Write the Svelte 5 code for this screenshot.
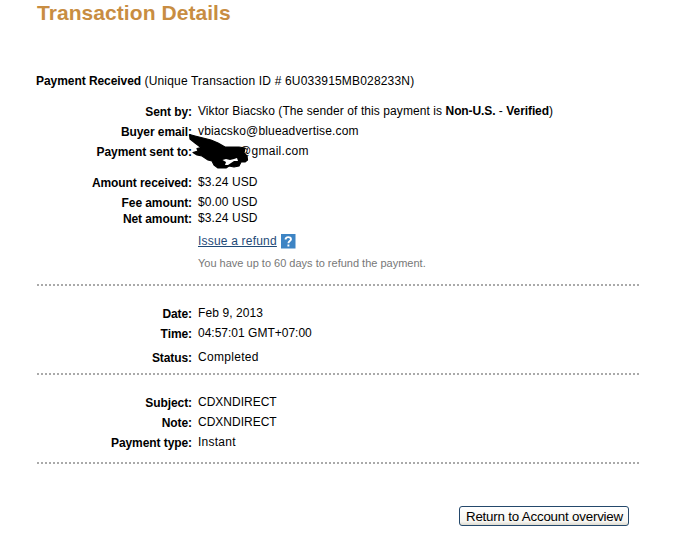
<script>
  const groups = [
    [
      { label: 'Sent by:', value: 'Viktor Biacsko (The sender of this payment is ', strong: 'Non-U.S.', strong2: 'Verified', gap: 0, ls: 0.08 },
      { label: 'Buyer email:', value: 'vbiacsko@blueadvertise.com', gap: 4, ls: 0.17 },
      { label: 'Payment sent to:', value: '@gmail.com', redacted: true, gap: 4, ls: 0.28 },
      { label: 'Amount received:', value: '$3.24 USD', gap: 15, ls: 0.1 },
      { label: 'Fee amount:', value: '$0.00 USD', gap: 4, ls: 0.1 },
      { label: 'Net amount:', value: '$3.24 USD', gap: 0, ls: 0.1 },
      { link: 'Issue a refund', gap: 7, ls: 0.2 },
      { hint: 'You have up to 60 days to refund the payment.', gap: 6, ls: 0 }
    ],
    [
      { label: 'Date:', value: 'Feb 9, 2013', gap: 0, ls: 0.1 },
      { label: 'Time:', value: '04:57:01 GMT+07:00', gap: 4, ls: 0 },
      { label: 'Status:', value: 'Completed', gap: 8, ls: 0.3 }
    ],
    [
      { label: 'Subject:', value: 'CDXNDIRECT', gap: 0, ls: 0 },
      { label: 'Note:', value: 'CDXNDIRECT', gap: 4, ls: 0 },
      { label: 'Payment type:', value: 'Instant', gap: 4, ls: 0.25 }
    ]
  ];
</script>

<main>
  <h1>Transaction Details</h1>
  <p class="received"><b>Payment Received</b> <span>(Unique Transaction ID # 6U033915MB028233N)</span></p>

  {#each groups as rows}
    <section>
      {#each rows as row}
        <div class="row" style:margin-top="{row.gap}px">
          <div class="label">{row.label ?? ''}</div>
          <div class="value" style:letter-spacing="{row.ls}px">
            {#if row.link}
              <a href="#refund">{row.link}</a>
              <svg class="help" width="15" height="15" viewBox="0 0 15 15">
                <rect width="14.5" height="14.5" fill="#3d84c4" />
                <path d="M4.6 5.4C4.6 2.5 10 2.3 10 5.2C10 7.1 7.4 7 7.4 9.2M7.4 10.5V12.5" fill="none" stroke="#fff" stroke-width="1.9" />
              </svg>
            {:else if row.hint}
              <span class="hint">{row.hint}</span>
            {:else if row.redacted}
              <span class="mail">{row.value}</span>
              <svg class="scribble" width="62" height="38" viewBox="188 132 62 38">
                <path d="M189.500 134.500L195 136L203 138L211 140L218 143L225 147H239L245 148L244 153L247 156L247.500 160L245 162H241L239 166L234 167L229 166L226 168H218L214 165L212 161L208 160L202 156L197 155L193 152.500L198 151L197 148.500L201 147.500L195 143L190 139Z" fill="#000" stroke="#000" stroke-width="1.200" stroke-linejoin="round" />
                <path d="M222.500 160L226 159L230 160L234 159L237 158L238 161L234 161L231 163L228 165H225L226 162Z" fill="#fff" />
              </svg>
            {:else if row.strong}
              {row.value}<b>{row.strong}</b> - <b>{row.strong2}</b>)
            {:else}
              {row.value}
            {/if}
          </div>
        </div>
      {/each}
    </section>
  {/each}

  <button>Return to Account overview</button>
</main>

<style>
  :global(body) { background: #fff; }
  main {
    box-sizing: border-box;
    width: 676px;
    height: 546px;
    padding: 1px 37px 0;
    overflow: hidden;
    display: flex;
    flex-direction: column;
    font: 12px/16px "Liberation Sans", Arial, sans-serif;
    color: #000;
    white-space: nowrap;
  }
  h1 { margin: 0; font-size: 21px; line-height: 23px; letter-spacing: 0.06px; color: #c88d42; }
  .received { margin: 49px 0 0 -1px; height: 16px; }
  .received b { letter-spacing: -0.06px; }
  .received span { letter-spacing: 0.18px; }
  section {
    width: 602px;
    box-sizing: border-box;
    padding: 19px 0 12px;
    background: repeating-linear-gradient(90deg, #aaa 0 2px, transparent 2px 4px) 0 100% / 100% 2px no-repeat;
  }
  section:nth-of-type(1) { height: 197px; padding-top: 14px; }
  section:nth-of-type(2), section:nth-of-type(3) { height: 89px; }
  .row { display: flex; height: 16px; }
  .label { width: 155px; line-height: 18px; text-align: right; font-weight: bold; letter-spacing: -0.08px; }
  .value { margin-left: 6px; display: flex; align-items: center; position: relative; white-space: pre; }
  .value b { letter-spacing: -0.1px; }
  a { color: #1f4a78; }
  .help { margin-left: 4px; }
  .hint { font-size: 11px; color: #777; }
  .mail { margin-left: 41px; }
  .scribble { position: absolute; left: -10px; top: -11px; }
  button {
    align-self: flex-end;
    box-sizing: border-box;
    width: 170px;
    height: 20px;
    margin: 42px 10px 0 0;
    padding: 1px 0 0 1px;
    border: 1px solid #24486b;
    border-radius: 3px;
    background: linear-gradient(#fff, #f6f5f1 80%, #dedbd0);
    color: #000;
    font: 13.333px/17px "Liberation Sans", Arial, sans-serif;
    letter-spacing: -0.2px;
  }
</style>
